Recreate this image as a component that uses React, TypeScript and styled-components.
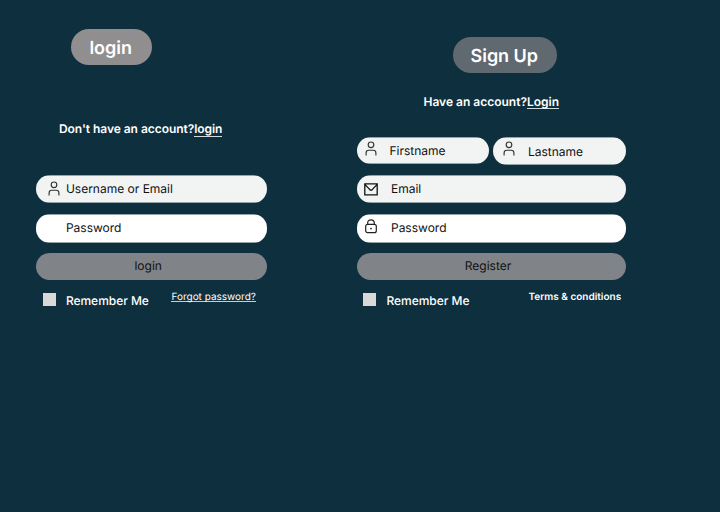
import React from 'react';
import styled, { createGlobalStyle } from 'styled-components';

const GlobalStyle = createGlobalStyle`
  * { box-sizing: border-box; }
  body { margin: 0; background: #0e2f3e; }
`;

const Page = styled.main`
  display: grid;
  grid-template-columns: 230.6px 269px;
  column-gap: 90px;
  align-items: start;
  width: 720px;
  height: 512px;
  padding-left: 36.4px;
  overflow: hidden;
  background: #0e2f3e;
  color: #fff;
  font-family: Inter, sans-serif;
  font-size: 12px;
  line-height: 16px;
  text-rendering: geometricPrecision;
`;

const Panel = styled.section<{ $top: number }>`
  display: flex;
  flex-direction: column;
  padding-top: ${p => p.$top}px;
`;

const Title = styled.h1<{ $left: number; $width: number; $tone: string; $drop?: number }>`
  display: flex;
  align-items: center;
  justify-content: center;
  width: ${p => p.$width}px;
  height: 36px;
  margin: 0 0 0 ${p => p.$left}px;
  padding: ${p => p.$drop ?? 3}px 1.4px 0 0;
  border-radius: 18px;
  background: ${p => p.$tone};
  font-size: 18px;
  font-weight: 600;
  line-height: 24px;
  letter-spacing: -0.02px;
  white-space: nowrap;
`;

const Prompt = styled.p<{ $left: number; $top: number; $bottom: number; $tracking?: number }>`
  margin: ${p => p.$top}px 0 ${p => p.$bottom}px ${p => p.$left}px;
  font-weight: 600;
  letter-spacing: ${p => p.$tracking ?? 0}px;
  white-space: nowrap;
`;

const TextLink = styled.a<{ $height?: number }>`
  color: inherit;
  text-decoration: none;
  display: inline-block;
  height: ${p => p.$height ?? 16}px;
  border-bottom: 1px solid #d3dadd;
  vertical-align: top;
`;

const Fields = styled.div`
  display: flex;
  flex-direction: column;
  gap: 11px;
`;

const NameRow = styled.div`
  display: grid;
  grid-template-columns: 132px 133px;
  gap: 4px;
  margin-bottom: -1px;
`;

const Field = styled.label<{ $solid?: boolean; $pad: number; $height?: number; $shift?: number }>`
  display: flex;
  align-items: flex-start;
  height: ${p => p.$height ?? 28}px;
  padding: ${p => 5 + (p.$shift ?? 0)}px 0 0 ${p => p.$pad}px;
  border-radius: 14px;
  background: linear-gradient(#96a3a8 1px, ${p => (p.$solid ? '#fff' : '#f2f4f4')} 1px calc(100% - 1px), #96a3a8 calc(100% - 1px));
  color: #111;
  white-space: nowrap;
`;

const IconSlot = styled.span<{ $width: number; $top?: number }>`
  flex: none;
  width: ${p => p.$width}px;
  margin-top: ${p => p.$top ?? 0}px;
  svg { display: block; }
`;

const Submit = styled.button`
  height: 27px;
  margin-top: -1px;
  padding: 0 7px 1px 0;
  border: 0;
  border-radius: 14px;
  background: #808488;
  color: #111;
  font: 400 12px/16px Inter, sans-serif;
  text-rendering: inherit;
`;

const Footer = styled.div`
  display: flex;
  align-items: flex-start;
  padding: 13px 0 0 6.5px;
  white-space: nowrap;
`;

const Box = styled.span`
  width: 13px;
  height: 13px;
  background: #d9d9d9;
`;

const Remember = styled.span`
  width: 105.5px;
  margin-left: 10px;
  font-weight: 500;
  letter-spacing: -0.03px;
`;

const Forgot = styled.a`
  height: 11px;
  margin-top: -2.5px;
  border-bottom: 1px solid #c5ced2;
  font-size: 10px;
  line-height: 12px;
`;

const Terms = styled.a`
  margin: -2px 0 0 36.5px;
  font-size: 10px;
  font-weight: 600;
  line-height: 12px;
`;

const Person = () => (
  <svg width="12" height="15" viewBox="0 0 12 15" fill="none" stroke="#333" strokeWidth="1.15">
    <circle cx="6" cy="3.8" r="2.8" />
    <path d="M1.1 14.4v-2.5Q1.1 9.2 3.8 9.2h4.4q2.7 0 2.7 2.7v2.5" />
  </svg>
);

const Mail = () => (
  <svg width="14" height="13" viewBox="0 0 14 13" fill="none" stroke="#111" strokeWidth="1.3">
    <path d="M.8.9h12.4v11H.8zM.8 1.4l4.8 5q1.4 1.3 2.8 0l4.8-5" />
  </svg>
);

const Lock = () => (
  <svg width="12" height="15" viewBox="0 0 12 15" fill="none" stroke="#222" strokeWidth="1.2">
    <rect x=".7" y="5.3" width="10.6" height="8.4" rx="2" />
    <path d="M2.7 5.3V4Q2.7.8 6 .8T9.3 4v1.3" />
    <circle cx="6" cy="9.6" r=".9" fill="#222" stroke="none" />
  </svg>
);

export default function App() {
  return (
    <>
      <GlobalStyle />
      <Page>
        <Panel $top={29}>
          <Title $left={34.5} $width={81} $tone="#918e90">login</Title>
          <Prompt $left={22.5} $top={56} $bottom={38} $tracking={-0.04}>
            Don't have an account?<TextLink>login</TextLink>
          </Prompt>
          <Fields>
            <Field $pad={11.6} $shift={0.5}>
              <IconSlot $width={17.9} $top={0.5}><Person /></IconSlot>
              Username or Email
            </Field>
            <Field $pad={29.5} $solid $height={29} $shift={0.5}>Password</Field>
            <Submit>login</Submit>
          </Fields>
          <Footer>
            <Box />
            <Remember>Remember Me</Remember>
            <Forgot>Forgot password?</Forgot>
          </Footer>
        </Panel>
        <Panel $top={36.5}>
          <Title $left={96} $width={104} $tone="#5f696f" $drop={4}>Sign Up</Title>
          <Prompt $left={66.5} $top={21} $bottom={27.5}>
            Have an account?<TextLink $height={15}>Login</TextLink>
          </Prompt>
          <Fields>
            <NameRow>
              <Field $pad={8.4} $height={27} $shift={1}>
                <IconSlot $width={24.1} $top={-2}><Person /></IconSlot>
                Firstname
              </Field>
              <Field $pad={10.2} $height={28} $shift={1.6}>
                <IconSlot $width={24.8} $top={-2.6}><Person /></IconSlot>
                Lastname
              </Field>
            </NameRow>
            <Field $pad={7} $shift={0.6}>
              <IconSlot $width={27} $top={2}><Mail /></IconSlot>
              Email
            </Field>
            <Field $pad={8.2} $solid $height={29} $shift={0.6}>
              <IconSlot $width={25.8} $top={-0.6}><Lock /></IconSlot>
              Password
            </Field>
            <Submit>Register</Submit>
          </Fields>
          <Footer>
            <Box />
            <Remember>Remember Me</Remember>
            <Terms>Terms &amp; conditions</Terms>
          </Footer>
        </Panel>
      </Page>
    </>
  );
}
